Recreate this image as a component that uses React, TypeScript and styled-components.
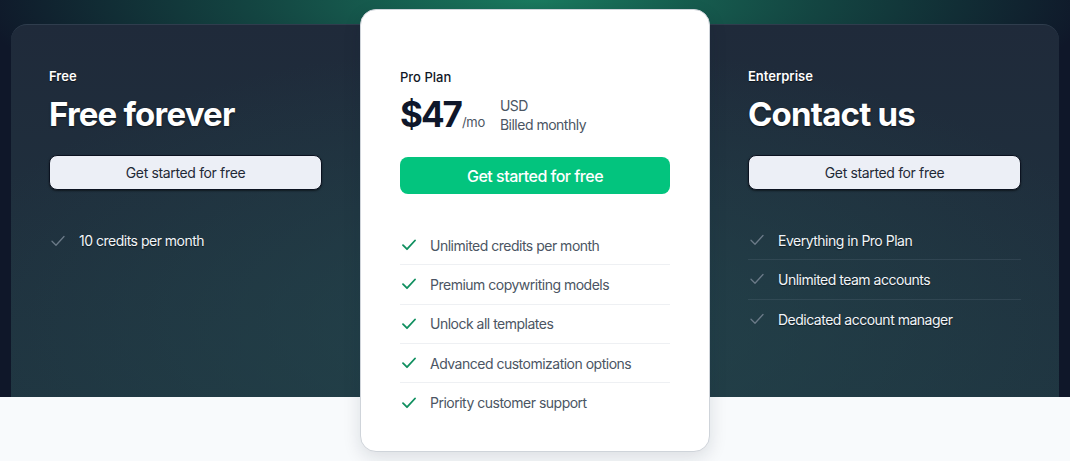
import React from "react";
import styled, { createGlobalStyle } from "styled-components";

const GlobalStyle = createGlobalStyle`
    body{
        margin:0;
        background:#f8fafc;
        font-family:Inter, "Noto Sans", sans-serif;
        -webkit-font-smoothing:antialiased;
    }
`;

const Page = styled.div`
    width:1070px;
    height:461px;
    overflow:hidden;
    background:#f8fafc;
`;

const Hero = styled.section`
    height:397px;
    box-sizing:border-box;
    padding:24px 11px 0;
    background:
        radial-gradient(ellipse 560px 140px at 50% 0%, rgba(26,122,95,1), rgba(22,100,82,0.6) 50%, transparent 100%),
        #0f1729;
`;

const Panel = styled.div`
    height:100%;
    display:grid;
    grid-template-columns:1fr 350px 1fr;
    border-radius:16px 16px 0 0;
    border-top:1px solid #2f3d4d;
    box-sizing:border-box;
    background:
        radial-gradient(ellipse 60% 80% at 50% 85%, rgba(36,72,78,0.75), transparent 100%),
        linear-gradient(180deg, #1f2a3a 0%, #1f3440 100%);
`;

const Column = styled.div`
    padding:43px 38px 0;
    color:#fff;
`;

const Card = styled.div`
    margin-top:-16px;
    height:443px;
    box-sizing:border-box;
    padding:59px 39px 0;
    background:#fff;
    border:1px solid #cfd4da;
    border-radius:16px;
    box-shadow:0 6px 18px rgba(15,23,42,0.12);
    color:#111827;
    position:relative;
    z-index:1;
`;

const PlanName = styled.div<{ dark?: boolean }>`
    font-size:13px;
    font-weight:${({ dark }) => (dark ? 600 : 500)};
    line-height:16px;
    color:${({ dark }) => (dark ? "#ffffff" : "#111827")};
    text-shadow:${({ dark }) => (dark ? "0 1px 1px rgba(0,0,0,0.6)" : "none")};
`;

const Headline = styled.h2`
    margin:10px 0 0;
    font-size:33px;
    line-height:40px;
    font-weight:700;
    letter-spacing:-0.8px;
    text-shadow:0 1px 2px rgba(0,0,0,0.6);
`;

const PriceRow = styled.div`
    display:flex;
    align-items:flex-start;
    margin-top:9px;
    height:42px;
`;

const Price = styled.span`
    font-size:35px;
    line-height:40px;
    font-weight:700;
    letter-spacing:-2px;
    color:#0f172a;
`;

const Per = styled.span`
    font-size:13px;
    letter-spacing:-0.3px;
    color:#4b5563;
    margin:20px 0 0 1px;
`;

const Billing = styled.div`
    margin-left:15px;
    font-size:14px;
    line-height:19px;
    letter-spacing:-0.5px;
    color:#4b5563;
    margin-top:2px;
`;

const Button = styled.button<{ primary?: boolean }>`
    display:block;
    width:100%;
    margin-top:21px;
    height:${({ primary }) => (primary ? "37px" : "35px")};
    border-radius:8px;
    font-family:inherit;
    cursor:pointer;
    font-size:${({ primary }) => (primary ? "16px" : "14px")};
    font-weight:${({ primary }) => (primary ? 500 : 400)};
    letter-spacing:${({ primary }) => (primary ? "-0.5px" : "-0.35px")};
    color:${({ primary }) => (primary ? "#ffffff" : "#1f2937")};
    background:${({ primary }) => (primary ? "#03c47e" : "#eceff6")};
    border:${({ primary }) => (primary ? "none" : "1px solid #0b1220")};
    box-shadow:${({ primary }) => (primary ? "none" : "0 1px 2px rgba(0,0,0,0.5)")};
`;

const Features = styled.ul<{ dark?: boolean }>`
    list-style:none;
    margin:${({ dark }) => (dark ? "31px" : "32px")} 0 0;
    padding:0;
`;

const Feature = styled.li<{ dark?: boolean }>`
    display:flex;
    align-items:center;
    gap:14px;
    height:39.3px;
    box-sizing:border-box;
    padding-left:2px;
    font-size:14px;
    letter-spacing:-0.5px;
    color:${({ dark }) => (dark ? "#f1f5f9" : "#4b5563")};
    text-shadow:${({ dark }) => (dark ? "0 1px 1px rgba(0,0,0,0.55)" : "none")};
    border-bottom:1px solid ${({ dark }) => (dark ? "rgba(120,140,155,0.18)" : "#eef0f3")};
    &:last-child{
        border-bottom:none;
    }
`;

function Check({ color, width }: { color: string; width: number }) {
    return (
        <svg width="14" height="12" viewBox="0 0 14 12" fill="none">
            <path d="M1 6.2 L5 10.2 L13 1.5" stroke={color} strokeWidth={width} strokeLinecap="round" strokeLinejoin="round" />
        </svg>
    );
}

const freeFeatures = ["10 credits per month"];
const proFeatures = [
    "Unlimited credits per month",
    "Premium copywriting models",
    "Unlock all templates",
    "Advanced customization options",
    "Priority customer support",
];
const enterpriseFeatures = ["Everything in Pro Plan", "Unlimited team accounts", "Dedicated account manager"];

function DarkPlan({ name, title, features }: { name: string; title: string; features: string[] }) {
    return (
        <Column>
            <PlanName dark>{name}</PlanName>
            <Headline>{title}</Headline>
            <Button>Get started for free</Button>
            <Features dark>
                {features.map((f) => (
                    <Feature dark key={f}>
                        <Check color="#6b7a88" width={1.3} />
                        {f}
                    </Feature>
                ))}
            </Features>
        </Column>
    );
}

export default function App() {
    return (
        <Page>
            <GlobalStyle />
            <Hero>
                <Panel>
                    <DarkPlan name="Free" title="Free forever" features={freeFeatures} />
                    <Card>
                        <PlanName>Pro Plan</PlanName>
                        <PriceRow>
                            <Price>$47</Price>
                            <Per>/mo</Per>
                            <Billing>
                                USD
                                <br />
                                Billed monthly
                            </Billing>
                        </PriceRow>
                        <Button primary>Get started for free</Button>
                        <Features>
                            {proFeatures.map((f) => (
                                <Feature key={f}>
                                    <Check color="#0f8f5f" width={1.8} />
                                    {f}
                                </Feature>
                            ))}
                        </Features>
                    </Card>
                    <DarkPlan name="Enterprise" title="Contact us" features={enterpriseFeatures} />
                </Panel>
            </Hero>
        </Page>
    );
}
